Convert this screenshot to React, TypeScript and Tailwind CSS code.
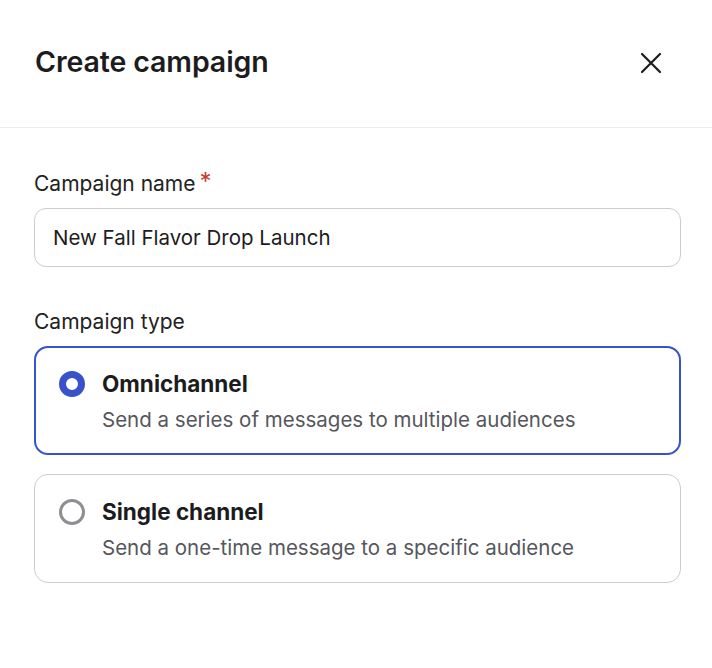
import { useState } from 'react';

const CAMPAIGN_TYPES = [
  { value: 'omni', label: 'Omnichannel', description: 'Send a series of messages to multiple audiences' },
  { value: 'single', label: 'Single channel', description: 'Send a one-time message to a specific audience' },
];

function CloseIcon() {
  return (
    <svg width="24" height="24" viewBox="0 0 24 24" fill="none" stroke="currentColor" strokeWidth="2.2" strokeLinecap="round">
      <path d="M3 3l18 18M21 3L3 21" />
    </svg>
  );
}

export default function App() {
  const [name, setName] = useState('New Fall Flavor Drop Launch');
  const [type, setType] = useState('omni');

  return (
    <div className="w-[712px] h-[668px] bg-white text-[#1c1c1e]" style={{ fontFamily: 'Inter, "Noto Sans", sans-serif' }}>
      <div className="flex items-center justify-between h-[128px] pl-[35px] pr-[50px] pb-[2px] border-b border-[#ececef]">
        <h1 className="text-[28.5px] font-semibold tracking-[-0.1px]">Create campaign</h1>
        <button className="w-[24px] h-[24px] text-[#1c1c1e] p-[1px] mb-[2px]">
          <CloseIcon />
        </button>
      </div>

      <div className="pl-[34px] pr-[31px] pt-[41px]">
        <label className="flex items-start text-[21px] leading-[30px] text-[#222]">
          Campaign name
          <span className="text-[#c8372d] ml-[4px] text-[24px] leading-[26px]">*</span>
        </label>
        <input
          value={name}
          onChange={(e) => setName(e.target.value)}
          className="mt-[9px] w-full h-[59px] rounded-[12px] border border-[#cbcbd2] px-[18px] text-[20.5px] text-[#1c1c1e] outline-none"
        />

        <div className="mt-[40px] text-[21px] leading-[30px] text-[#222]">Campaign type</div>
        <div className="mt-[9px] flex flex-col gap-[19px]">
          {CAMPAIGN_TYPES.map((option) => {
            const selected = type === option.value;
            return (
              <button
                key={option.value}
                onClick={() => setType(option.value)}
                className={`flex items-start text-left h-[109px] rounded-[14px] ${
                  selected ? 'border-2 border-[#3a52c9] pl-[23px] pt-[21px]' : 'border border-[#cbcbd2] pl-[24px] pt-[22px]'
                }`}
              >
                <span
                  className={`mt-[2px] w-[26px] h-[26px] rounded-full shrink-0 ${
                    selected ? 'border-[7px] border-[#3a52c9]' : 'border-[3px] border-[#8e8e93]'
                  }`}
                />
                <span className="ml-[17px] flex flex-col">
                  <span className="text-[22.5px] font-bold leading-[30px] text-[#1c1c1e]">{option.label}</span>
                  <span className="mt-[6px] text-[20.5px] leading-[30px] text-[#56565c]">{option.description}</span>
                </span>
              </button>
            );
          })}
        </div>
      </div>
    </div>
  );
}
